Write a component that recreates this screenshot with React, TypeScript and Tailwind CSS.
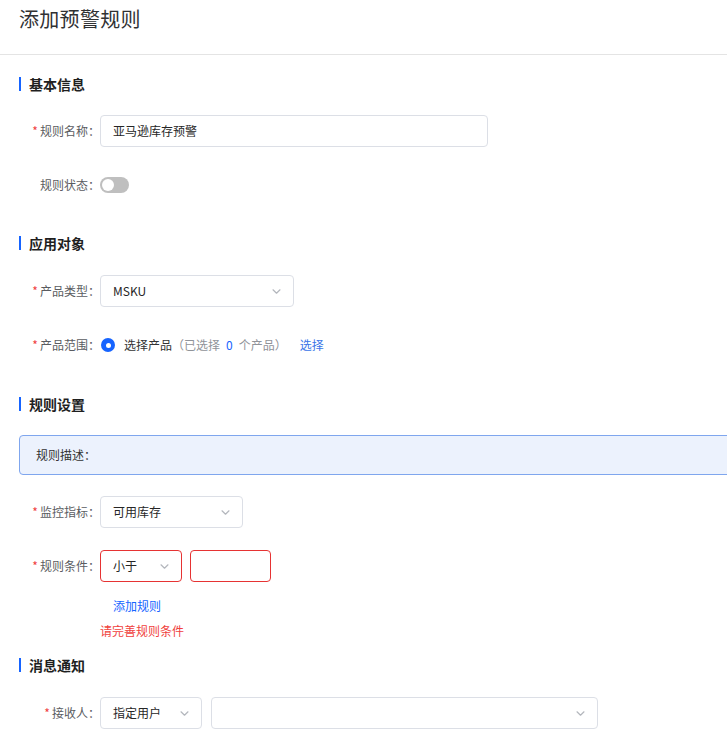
import React from "react";

const FONT = { fontFamily: '"Noto Sans CJK SC", "Noto Sans", sans-serif' };

function Chevron() {
  return (
    <svg width="9" height="5" viewBox="0 0 9 5" className="shrink-0">
      <path d="M1 0.8l3.5 3.4 3.5-3.4" fill="none" stroke="#b4b7bd" strokeWidth="1.2" strokeLinecap="round" strokeLinejoin="round" />
    </svg>
  );
}

function SectionTitle({ children, className = "" }: { children: React.ReactNode; className?: string }) {
  return (
    <div className={"flex items-center h-[20px] " + className}>
      <div className="w-[2px] h-[14px] bg-[#1664ff]" />
      <div className="ml-[8px] text-[14px] font-bold text-[#1f1f1f] leading-[20px]">{children}</div>
    </div>
  );
}

function Label({ text, required = true }: { text: string; required?: boolean }) {
  return (
    <div className="w-[81px] shrink-0 flex items-center justify-end text-[12px] text-[#5a5c61] leading-[32px]">
      {required && <span className="text-[#f0413d] mr-[2px] text-[12px]">*</span>}
      <span>{text}：</span>
    </div>
  );
}

function Select({ value, w, error = false }: { value: string; w: string; error?: boolean }) {
  return (
    <div
      className={
        "h-[32px] rounded-[4px] border flex items-center justify-between pl-[12px] pr-[12px] text-[12px] text-[#262626] bg-white " +
        (error ? "border-[#e63333] " : "border-[#dcdfe6] ") +
        w
      }
    >
      <span>{value}</span>
      <Chevron />
    </div>
  );
}

export default function App() {
  return (
    <div className="w-[727px] h-[748px] overflow-hidden bg-white" style={FONT}>
      <div className="h-[55px] border-b border-[#e4e4e4] px-[19px] pt-[5px]">
        <div className="text-[20px] leading-[28px] text-[#303133] tracking-[0.3px]">添加预警规则</div>
      </div>
      <div className="pl-[19px]">
        <SectionTitle className="mt-[19px]">基本信息</SectionTitle>
        <div className="flex items-center mt-[21px]">
          <Label text="规则名称" />
          <div className="w-[388px] h-[32px] rounded-[4px] border border-[#dcdfe6] flex items-center pl-[12px] text-[12px] text-[#262626]">
            亚马逊库存预警
          </div>
        </div>
        <div className="flex items-center mt-[22px]">
          <Label text="规则状态" required={false} />
          <div className="w-[29px] h-[16px] rounded-full bg-[#bfbfbf] flex items-center pl-[2px]">
            <div className="w-[12px] h-[12px] rounded-full bg-white" />
          </div>
        </div>

        <SectionTitle className="mt-[32px]">应用对象</SectionTitle>
        <div className="flex items-center mt-[22px]">
          <Label text="产品类型" />
          <Select value="MSKU" w="w-[194px]" />
        </div>
        <div className="flex items-center mt-[22px]">
          <Label text="产品范围" />
          <div className="w-[14px] h-[14px] rounded-full bg-[#1664ff] flex items-center justify-center ml-[1px]">
            <div className="w-[5px] h-[5px] rounded-full bg-white" />
          </div>
          <div className="ml-[9px] text-[12px] text-[#333]">
            选择产品<span className="text-[#909399]">（已选择<span className="text-[#1664ff] mx-[6px]">0</span>个产品）</span>
          </div>
          <div className="ml-[13px] text-[12px] text-[#3a75e8]">选择</div>
        </div>

        <SectionTitle className="mt-[33px]">规则设置</SectionTitle>
        <div className="mt-[21px] w-[760px] h-[40px] rounded-[4px] border border-[#7fa6ee] bg-[#ecf2fd] flex items-center pl-[16px] text-[12px] text-[#333]">
          规则描述：
        </div>
        <div className="flex items-center mt-[21px]">
          <Label text="监控指标" />
          <Select value="可用库存" w="w-[143px]" />
        </div>
        <div className="flex items-center mt-[22px]">
          <Label text="规则条件" />
          <Select value="小于" w="w-[82px]" error />
          <div className="ml-[8px] w-[81px] h-[32px] rounded-[4px] border border-[#e63333]" />
        </div>
        <div className="ml-[94px] mt-[15px] text-[12px] leading-[18px] text-[#1664ff]">添加规则</div>
        <div className="ml-[81px] mt-[7px] text-[12px] leading-[18px] text-[#f0413d]">请完善规则条件</div>

        <SectionTitle className="mt-[15px]">消息通知</SectionTitle>
        <div className="flex items-center mt-[22px]">
          <Label text="接收人" />
          <Select value="指定用户" w="w-[102px]" />
          <div className="ml-[9px]">
            <Select value="" w="w-[387px]" />
          </div>
        </div>
      </div>
    </div>
  );
}
